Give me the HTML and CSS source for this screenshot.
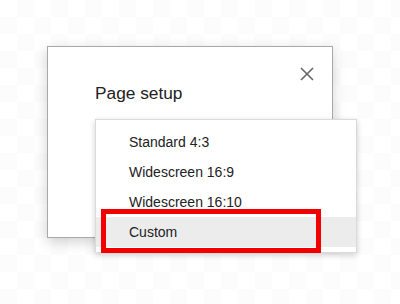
FILE: index.html
```html
<!DOCTYPE html>
<html lang="en">
<head>
    <meta charset="UTF-8">
    <meta name="viewport" content="width=device-width, initial-scale=1.0">
    <title>Page setup</title>
    <link rel="stylesheet" href="styles.css">
</head>
<body>
    <div class="dialog">
        <div class="dialog-header">
            <h2 class="dialog-title">Page setup</h2>
            <button class="close-btn" aria-label="Close">
                <svg width="14" height="14" viewBox="0 0 14 14">
                    <path d="M1 1 L13 13 M13 1 L1 13" stroke="#666" stroke-width="1.6" fill="none"/>
                </svg>
            </button>
        </div>

        <ul class="menu">
            <li class="menu-item">Standard 4:3</li>
            <li class="menu-item">Widescreen 16:9</li>
            <li class="menu-item">Widescreen 16:10</li>
            <li class="menu-item active">
                Custom
                <span class="highlight-box"></span>
            </li>
        </ul>
    </div>
</body>
</html>
```

FILE: styles.css
```css
body {
    margin: 0;
    font-family: 'Liberation Sans', Arial, sans-serif;
    background: #fff repeating-conic-gradient(#fcfcfc 0 25%, #fff 0 50%) 0 0 / 34px 34px;
    height: 304px;
    overflow: hidden;
}

.dialog {
    position: relative;
    box-sizing: border-box;
    width: 286px;
    height: 192px;
    margin: 46px 0 0 47px;
    padding: 20px 18px 0 47px;
    background: white;
    border: 1px solid #a9a9a9;
    box-shadow: 0 4px 12px rgba(0,0,0,0.18);
}

.dialog-header {
    display: flex;
    align-items: flex-start;
}

.dialog-title {
    margin: 16px 0 0 0;
    font-size: 17.3px;
    font-weight: normal;
    line-height: 20px;
    color: #222;
}

.close-btn {
    margin-left: auto;
    width: 14px;
    height: 14px;
    padding: 0;
    border: none;
    background: none;
    display: flex;
}

.menu {
    position: absolute;
    left: 47px;
    top: 72px;
    box-sizing: border-box;
    width: 262px;
    margin: 0;
    padding: 7px 0 5px 0;
    list-style: none;
    background: white;
    border: 1px solid #dadada;
    box-shadow: 0 2px 6px rgba(0,0,0,0.2);
}

.menu-item {
    position: relative;
    height: 30px;
    line-height: 30px;
    padding-left: 33px;
    font-size: 14px;
    color: #222;
}

.menu-item.active {
    background: #ececec;
}

.highlight-box {
    position: absolute;
    left: 5px;
    top: -8px;
    box-sizing: border-box;
    width: 220px;
    height: 44px;
    border: 5px solid #f20000;
}
```
